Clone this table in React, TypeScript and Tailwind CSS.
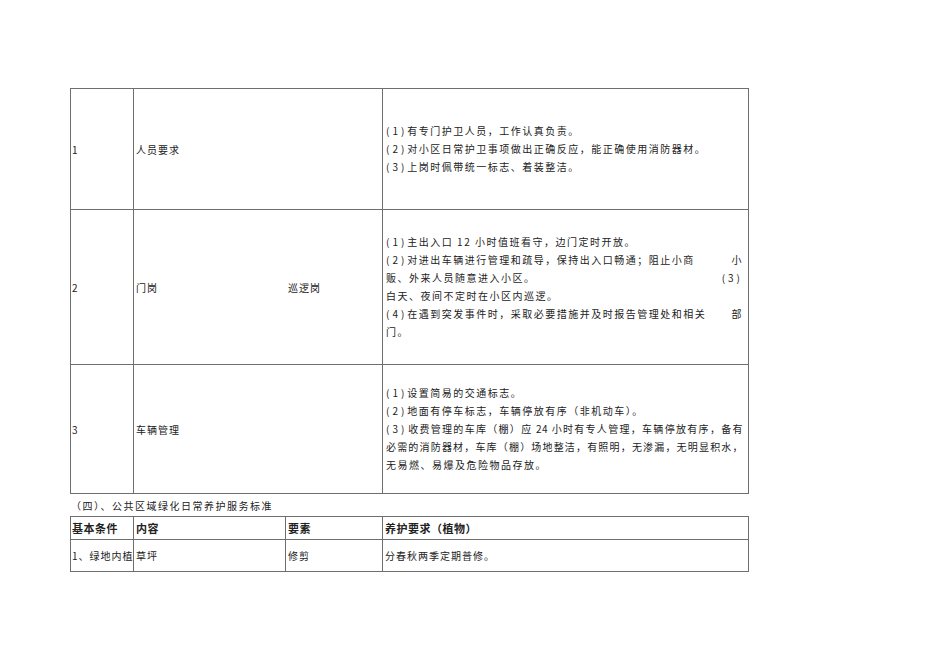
import React from "react"

const font = { fontFamily: '"Noto Sans CJK SC", "Noto Sans", sans-serif' }

// half-width numbered marker, e.g. (1)
function N({ n }: { n: string }) {
  return <span className="tracking-[3px]">({n})</span>
}

function Line({ children, justify }: { children: React.ReactNode; justify?: boolean }) {
  return (
    <div
      className={
        "h-[18px] leading-[18px] whitespace-nowrap " +
        (justify ? "tracking-[0.5px] [text-align-last:justify]" : "")
      }
    >
      {children}
    </div>
  )
}

function Split({ left, right }: { left: React.ReactNode; right: React.ReactNode }) {
  return (
    <div className="flex h-[18px] items-center justify-between leading-[18px] whitespace-nowrap">
      <span>{left}</span>
      <span>{right}</span>
    </div>
  )
}

const cell = "border border-[#6e6e6e] align-middle p-0"
const body = cell + " pl-[3px] pr-[5px] tracking-[1.5px] overflow-hidden"

export default function App() {
  return (
    <div className="min-h-[672px] w-[950px] bg-white text-[10px] tracking-[1px] text-[#222]" style={font}>
      <div className="ml-[70px] pt-[88px] w-[679px]">
        <table className="w-full table-fixed border-collapse">
          <colgroup>
            <col className="w-[63px]" />
            <col className="w-[249px]" />
            <col />
          </colgroup>
          <tbody>
            <tr className="h-[121px]">
              <td className={cell + " pl-px"}>1</td>
              <td className={cell + " pl-[2px]"}>人员要求</td>
              <td className={body}>
                <Line><N n="1" />有专门护卫人员，工作认真负责。</Line>
                <Line><N n="2" />对小区日常护卫事项做出正确反应，能正确使用消防器材。</Line>
                <Line><N n="3" />上岗时佩带统一标志、着装整洁。</Line>
              </td>
            </tr>
            <tr className="h-[155px]">
              <td className={cell + " pl-px"}>2</td>
              <td className={cell + " pl-[2px]"}>
                <div className="flex gap-[130px]">
                  <span>门岗</span>
                  <span>巡逻岗</span>
                </div>
              </td>
              <td className={body}>
                <Line><N n="1" />主出入口 12 小时值班看守，边门定时开放。</Line>
                <Split left={<><N n="2" />对进出车辆进行管理和疏导，保持出入口畅通；阻止小商</>} right="小" />
                <Split left="贩、外来人员随意进入小区。" right={<N n="3" />} />
                <Line>白天、夜间不定时在小区内巡逻。</Line>
                <Split left={<><N n="4" />在遇到突发事件时，采取必要措施并及时报告管理处和相关</>} right="部" />
                <Line>门。</Line>
              </td>
            </tr>
            <tr className="h-[129px]">
              <td className={cell + " pl-px"}>3</td>
              <td className={cell + " pl-[2px]"}>车辆管理</td>
              <td className={body}>
                <Line><N n="1" />设置简易的交通标志。</Line>
                <Line><N n="2" />地面有停车标志，车辆停放有序（非机动车）。</Line>
                <Line justify><N n="3" />收费管理的车库（棚）应 24 小时有专人管理，车辆停放有序，备有</Line>
                <Line justify>必需的消防器材，车库（棚）场地整洁，有照明，无渗漏，无明显积水，</Line>
                <Line>无易燃、易爆及危险物品存放。</Line>
              </td>
            </tr>
          </tbody>
        </table>

        <div className="flex h-[22px] items-center pl-[1px] text-[10px] tracking-[1.5px]">（四）、公共区域绿化日常养护服务标准</div>

        <table className="w-full table-fixed border-collapse">
          <colgroup>
            <col className="w-[63px]" />
            <col className="w-[152px]" />
            <col className="w-[97px]" />
            <col />
          </colgroup>
          <tbody>
            <tr className="h-[23px] font-bold text-[11px] tracking-[0.5px]">
              <td className={cell + " pl-px"}>基本条件</td>
              <td className={cell + " pl-[2px]"}>内容</td>
              <td className={cell + " pl-[2px]"}>要素</td>
              <td className={cell + " pl-[2px]"}>养护要求（植物）</td>
            </tr>
            <tr className="h-[32px]">
              <td className={cell + " pl-px overflow-hidden whitespace-nowrap"}>1、绿地内植</td>
              <td className={cell + " pl-[2px]"}>草坪</td>
              <td className={cell + " pl-[2px]"}>修剪</td>
              <td className={cell + " pl-[2px]"}>分春秋两季定期普修。</td>
            </tr>
          </tbody>
        </table>
      </div>
    </div>
  )
}
